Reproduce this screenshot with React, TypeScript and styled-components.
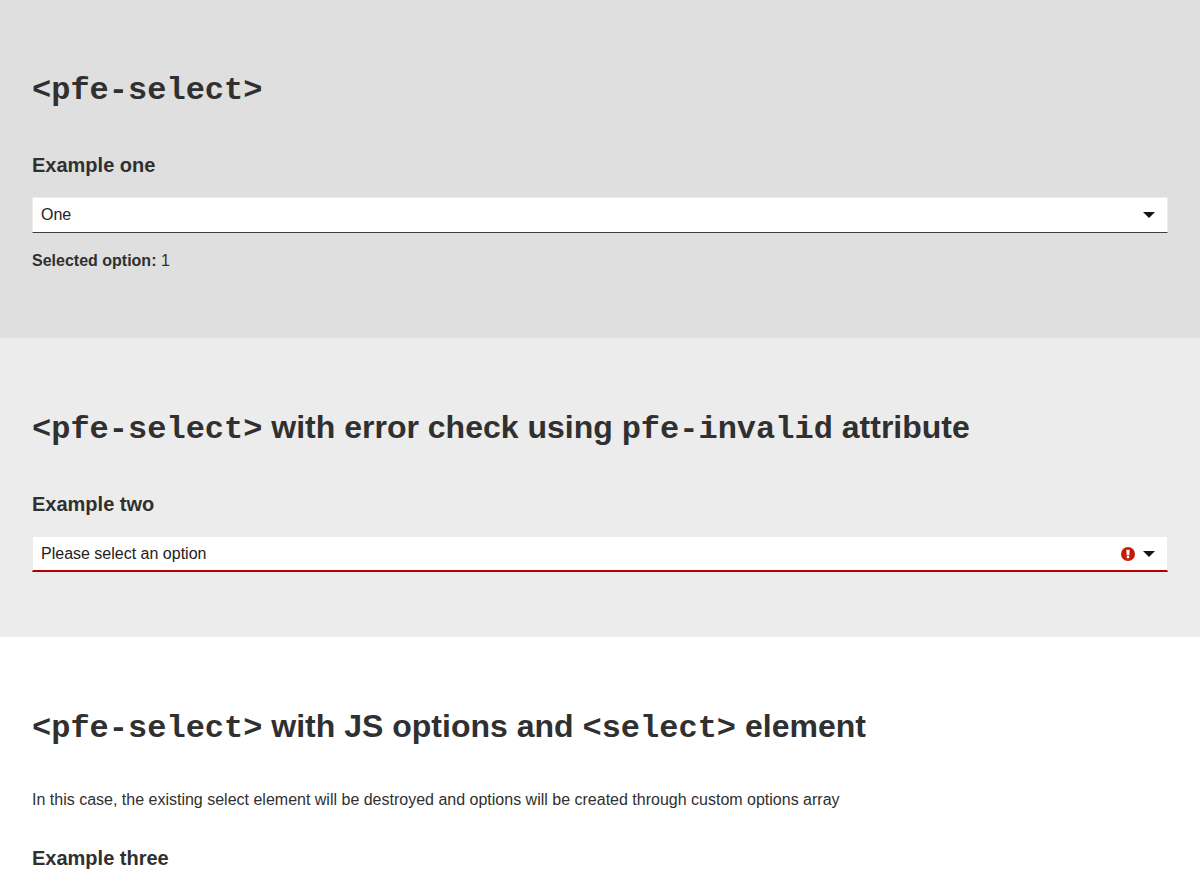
import React, { useState } from "react";
import styled, { createGlobalStyle } from "styled-components";

const GlobalStyle = createGlobalStyle`
  *, *::before, *::after { box-sizing: border-box; }
  body {
    margin: 0;
    background: #fff;
    color: #303030;
    font-family: "Liberation Sans", Arial, sans-serif;
    font-size: 16px;
    line-height: 24px;
  }
`;

const Band = styled.section<{ $bg: string }>`
  padding: 64px 32px 65px;
  background: ${(p) => p.$bg};
`;

const Title = styled.h1<{ $codeOnly?: boolean }>`
  margin: 0;
  font-size: 32px;
  line-height: ${(p) => (p.$codeOnly ? 49 : 50)}px;
  font-weight: 700;
`;

const Code = styled.code`
  font-family: "Liberation Mono", "Courier New", monospace;
  font-size: 32px;
  line-height: 32px;
`;

const Label = styled.label`
  display: block;
  margin-top: 38px;
  font-size: 20px;
  line-height: 28px;
  font-weight: 700;
`;

const SubHeading = styled.h2`
  margin: 32px 0 0;
  font-size: 20px;
  line-height: 28px;
  font-weight: 700;
`;

const Field = styled.div`
  position: relative;
  margin-top: 18px;
`;

const Select = styled.select<{ $invalid?: boolean }>`
  display: block;
  appearance: none;
  width: 100%;
  height: 36px;
  padding: 0 56px 0 8px;
  border: 1px solid #ececec;
  border-bottom: ${(p) => (p.$invalid ? "2px solid #b80000" : "1px solid #3c3f42")};
  border-radius: 0;
  background: #fff;
  color: #222;
  font: inherit;
`;

const Icons = styled.span`
  position: absolute;
  top: 0;
  right: 13px;
  height: 100%;
  display: flex;
  align-items: center;
  gap: 8px;
  pointer-events: none;
`;

const Note = styled.p`
  margin: 16px 0 0;
`;

const Lead = styled.p`
  margin: 37px 0 0;
`;

const Caret = () => (
  <svg width="12" height="6" viewBox="0 0 12 6" aria-hidden="true">
    <path d="M0 0H12L6 6Z" fill="#151515" />
  </svg>
);

const ErrorMark = () => (
  <svg width="14" height="14" viewBox="0 0 14 14" aria-hidden="true">
    <circle cx="7" cy="7" r="7" fill="#c9190b" />
    <path d="M5.4 2.8H8.6L8.3 8.2H5.7Z" fill="#fff" />
    <circle cx="7" cy="10.1" r="1.4" fill="#fff" />
  </svg>
);

export default function App() {
  const [value, setValue] = useState("1");
  const [second, setSecond] = useState("");
  return (
    <main>
      <GlobalStyle />
      <Band $bg="#dfdfdf">
        <Title $codeOnly><Code>&lt;pfe-select&gt;</Code></Title>
        <Label htmlFor="one">Example one</Label>
        <Field>
          <Select id="one" value={value} onChange={(e) => setValue(e.target.value)}>
            <option value="1">One</option>
            <option value="2">Two</option>
          </Select>
          <Icons><Caret /></Icons>
        </Field>
        <Note><strong>Selected option:</strong> {value}</Note>
      </Band>
      <Band $bg="#ececec">
        <Title><Code>&lt;pfe-select&gt;</Code> with error check using <Code>pfe-invalid</Code> attribute</Title>
        <Label htmlFor="two">Example two</Label>
        <Field>
          <Select id="two" $invalid={second === ""} aria-invalid={second === ""} value={second} onChange={(e) => setSecond(e.target.value)}>
            <option value="">Please select an option</option>
            <option value="1">One</option>
          </Select>
          <Icons>{second === "" && <ErrorMark />}<Caret /></Icons>
        </Field>
      </Band>
      <Band $bg="#fff">
        <Title><Code>&lt;pfe-select&gt;</Code> with JS options and <Code>&lt;select&gt;</Code> element</Title>
        <Lead>In this case, the existing select element will be destroyed and options will be created through custom options array</Lead>
        <SubHeading>Example three</SubHeading>
      </Band>
    </main>
  );
}
